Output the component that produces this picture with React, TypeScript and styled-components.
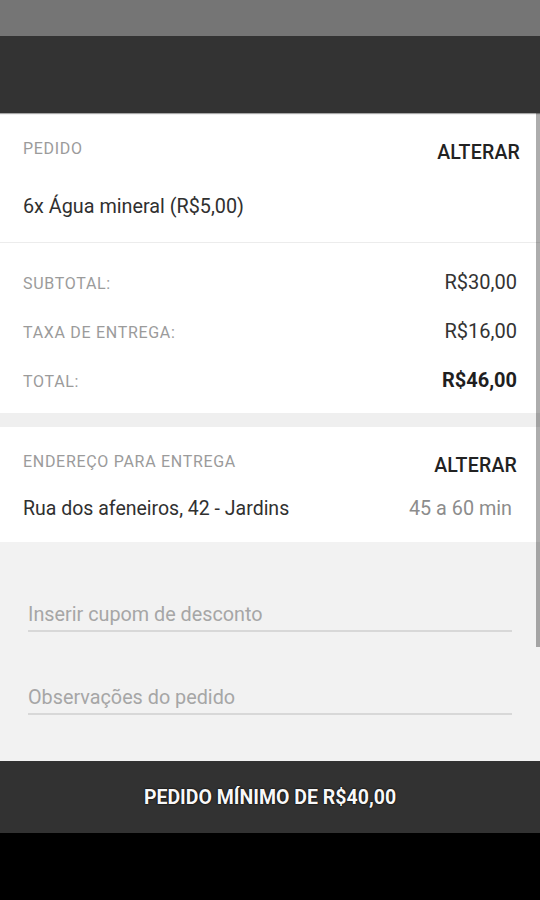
import React from 'react';
import styled, { createGlobalStyle } from 'styled-components';

const GlobalStyle = createGlobalStyle`
  html, body {
    margin: 0;
    padding: 0;
    background: #000;
  }
  * {
    box-sizing: border-box;
  }
  body {
    font-family: Roboto, "Noto Sans", "Liberation Sans", sans-serif;
  }
`;

const Screen = styled.div`
  width: 540px;
  height: 900px;
  display: flex;
  flex-direction: column;
  overflow: hidden;
`;

const StatusBar = styled.div`
  height: 36px;
  flex-shrink: 0;
  background: #757575;
`;

const Toolbar = styled.div`
  height: 77px;
  flex-shrink: 0;
  background: #333333;
  box-shadow: 0 1px 1px rgba(0, 0, 0, 0.35);
  position: relative;
  z-index: 1;
`;

const Content = styled.div`
  flex: 1;
  position: relative;
  background: #f2f2f2;
  display: flex;
  flex-direction: column;
`;

const Scrollbar = styled.div`
  position: absolute;
  top: 0;
  right: 0;
  width: 4px;
  height: 534px;
  background: rgba(0, 0, 0, 0.32);
`;

const Card = styled.section<{ $top: number; $bottom: number; $right?: number; $gap?: number }>`
  background: #fff;
  padding: ${(p) => p.$top}px ${(p) => p.$right ?? 23}px ${(p) => p.$bottom}px 23px;
  display: flex;
  flex-direction: column;
  gap: ${(p) => p.$gap ?? 0}px;
`;

const Divider = styled.div`
  height: 1px;
  background: #ececec;
`;

const Band = styled.div`
  height: 14px;
  background: #efefef;
`;

const HeaderRow = styled.div`
  display: flex;
  justify-content: space-between;
  align-items: flex-start;
`;

const Label = styled.span`
  font-size: 16px;
  line-height: 20px;
  letter-spacing: 0.7px;
  color: #9b9b9b;
  text-transform: uppercase;
`;

const Action = styled.button`
  margin: 2px 0 0;
  padding: 0;
  border: none;
  background: none;
  font-family: inherit;
  font-size: 19.5px;
  line-height: 24px;
  font-weight: 500;
  color: #222;
  letter-spacing: 0.2px;
`;

const BodyText = styled.div<{ $mt: number }>`
  margin-top: ${(p) => p.$mt}px;
  font-size: 19.8px;
  line-height: 24px;
  color: #303030;
`;

const InfoRow = styled.div<{ $mt?: number }>`
  margin-top: ${(p) => p.$mt ?? 0}px;
  display: flex;
  justify-content: space-between;
  align-items: baseline;
  height: 24px;
`;

const Value = styled.span<{ $bold?: boolean }>`
  font-size: 20px;
  line-height: 24px;
  color: ${(p) => (p.$bold ? '#1f1f1f' : '#333')};
  font-weight: ${(p) => (p.$bold ? 700 : 400)};
`;

const Address = styled.span`
  font-size: 19.5px;
  line-height: 24px;
  color: #303030;
`;

const Muted = styled.span`
  font-size: 19.8px;
  line-height: 24px;
  color: #8c8c8c;
  margin-right: 5px;
`;

const Form = styled.div`
  padding: 60px 28px 0;
  display: flex;
  flex-direction: column;
  gap: 53px;
`;

const Field = styled.input`
  display: block;
  width: 100%;
  border: none;
  border-bottom: 2px solid #d8d8d8;
  background: transparent;
  padding: 0 0 4px;
  margin: 0;
  font-family: inherit;
  font-size: 19.8px;
  line-height: 24px;
  height: 30px;
  color: #333;
  outline: none;

  &::placeholder {
    color: #a6a6a6;
  }
`;

const BottomBar = styled.button`
  height: 72px;
  flex-shrink: 0;
  border: none;
  background: #323232;
  display: flex;
  align-items: center;
  justify-content: center;
  padding-top: 2px;
  font-family: inherit;
  font-size: 19.5px;
  font-weight: 700;
  color: #f8f8f8;
  text-shadow: 0 0 2px #000, 0 0 1px #000;
`;

const NavBar = styled.div`
  height: 67px;
  flex-shrink: 0;
  background: #000;
`;

const totals = [
  { label: 'Subtotal:', value: 'R$30,00' },
  { label: 'Taxa de entrega:', value: 'R$16,00' },
  { label: 'Total:', value: 'R$46,00', bold: true },
];

export default function App() {
  return (
    <>
      <GlobalStyle />
      <Screen>
        <StatusBar />
        <Toolbar />
        <Content>
          <Card $top={26} $bottom={23} $right={20}>
            <HeaderRow>
              <Label>Pedido</Label>
              <Action>ALTERAR</Action>
            </HeaderRow>
            <BodyText $mt={30}>6x Água mineral (R$5,00)</BodyText>
          </Card>
          <Divider />
          <Card $top={27} $bottom={21} $gap={25}>
            {totals.map((t) => (
              <InfoRow key={t.label}>
                <Label>{t.label}</Label>
                <Value $bold={t.bold}>{t.value}</Value>
              </InfoRow>
            ))}
          </Card>
          <Band />
          <Card $top={25} $bottom={21}>
            <HeaderRow>
              <Label>Endereço para entrega</Label>
              <Action>ALTERAR</Action>
            </HeaderRow>
            <InfoRow $mt={19}>
              <Address>Rua dos afeneiros, 42 - Jardins</Address>
              <Muted>45 a 60 min</Muted>
            </InfoRow>
          </Card>
          <Form>
            <Field placeholder="Inserir cupom de desconto" />
            <Field placeholder="Observações do pedido" />
          </Form>
          <Scrollbar />
        </Content>
        <BottomBar>PEDIDO MÍNIMO DE R$40,00</BottomBar>
        <NavBar />
      </Screen>
    </>
  );
}
